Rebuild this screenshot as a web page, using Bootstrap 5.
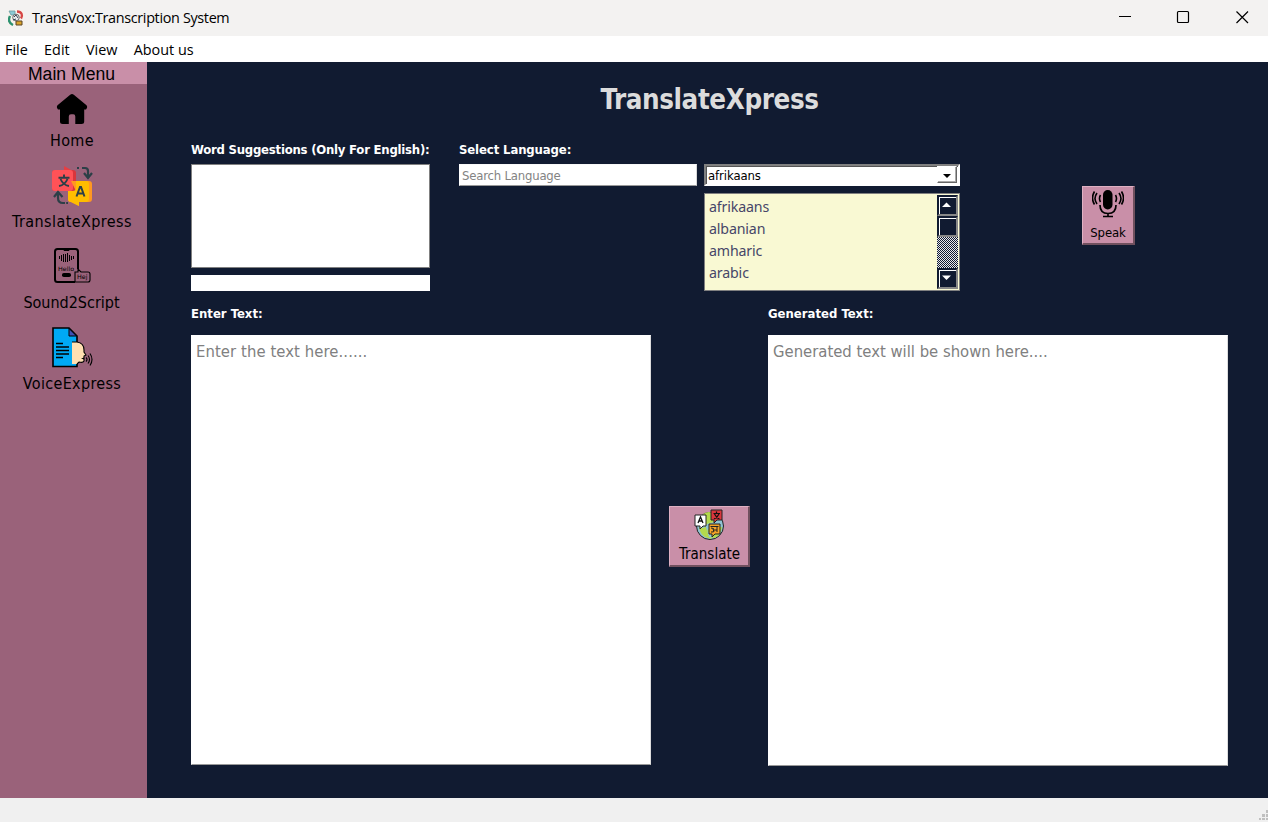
<!DOCTYPE html>
<html lang="en">
<head>
<meta charset="utf-8">
<title>TransVox:Transcription System</title>
<link href="https://cdn.jsdelivr.net/npm/bootstrap@5.3.0/dist/css/bootstrap.min.css" rel="stylesheet">
<style>
  :root { --navy:#111b31; --plum:#9a627a; --pink:#c98fa8; }
  body { width:1268px; height:822px; font-family:"DejaVu Sans Condensed","DejaVu Sans",sans-serif; font-stretch:condensed; color:#000; overflow:hidden; background:#f0f0f0; }
  .titlebar { height:36px; background:#f3f2f1; font:14.4px/34px "Open Sans","Noto Sans",sans-serif; }
  .app-icon { margin-left:8px; }
  .titlebar .caption { margin-left:8px; letter-spacing:-.34px; }
  .winctl { width:59px; }
  .winctl-last { margin-right:-4px; }
  .menubar { height:26px; background:#fff; font:14.4px/27px "Open Sans","Noto Sans",sans-serif; padding-left:5px; gap:16.3px; }
  .side { width:147px; background:var(--plum); }
  .side-head { height:22px; background:var(--pink); font:17.6px/24px "Liberation Sans",sans-serif; padding-right:4px; }
  .side-item { height:81px; padding-top:4px; padding-right:4px; font-size:16px; line-height:20px; color:#000; }
  .side-item svg { display:block; margin-bottom:1px; }
  .side-tall { padding-top:0; }
  .side-tall svg { margin-bottom:5px; }
  .wide-1 { letter-spacing:.42px; padding-left:1px; }
  .wide-2 { letter-spacing:.33px; padding-left:1px; }
  .work { background:var(--navy); padding:0 40px 0 44px; }
  .work h1 { font-size:27.5px; line-height:34px; font-weight:700; color:#dcdcdc; letter-spacing:-.4px; margin:20px 0 0; height:59px; }
  .lbl { font-size:13px; font-weight:700; line-height:18px; height:17px; color:#fff; white-space:nowrap; }
  .lbl-tight { letter-spacing:-.23px; }
  .lbl-snug { letter-spacing:-.12px; }
  .top-grid { height:150px; }
  .lower { margin-top:14px; }
  .col-words { width:239px; margin-right:29px; }
  .suggest { height:104px; border:1px solid #808080; background:#fff; margin-top:6px; }
  .word-entry { height:16px; background:#fff; margin-top:7px; }
  .pickers { margin-top:6px; }
  .search { width:238px; height:22px; border:1px solid; border-color:#f8f8f8 #d8d8d8 #999 #fff; background:#fff; color:#838383; font-size:13px; letter-spacing:-.2px; line-height:21px; padding-left:2px; margin-right:7px; }
  .combo { width:256px; height:22px; background:#fff; border:2px solid; border-color:#808080 #fff #fff #808080; box-shadow:inset 1px 1px #555; font-size:13px; letter-spacing:-.1px; line-height:19px; padding-left:2px; }
  .combo-btn { width:20px; height:17px; border:1px solid; border-color:#fff #666 #666 #fff; box-shadow:inset -1px -1px #aaa; margin-right:1px; }
  .langs { width:256px; height:98px; margin-top:7px; background:#f9f9d3; border:1px solid #808080; font-family:"Noto Sans",sans-serif; font-size:14.2px; letter-spacing:-.15px; line-height:22px; color:#464668; padding:1px 1px 1px 4px; }
  .lang-rows { padding-top:1px; }
  .sbar { width:21px; height:94px; background:repeating-conic-gradient(#e9e9ec 0 25%, var(--navy) 0 50%) 0 0/2px 2px; }
  .sbtn { height:21px; background:var(--navy); border:2px solid; border-color:var(--navy) #888 #888 var(--navy); box-shadow:inset 1px 1px #fff; }
  .tkbtn { background:var(--pink); border:solid; border-width:1px 2px 2px 1px; border-color:#dfb1c3 #70505e #70505e #dfb1c3; }
  .speak { width:53px; height:59px; margin:45px 0 0 122px; font-size:13px; letter-spacing:-.1px; line-height:16px; padding:2px 0 2px 0; }
  .edit { width:460px; height:430px; background:#fff; border:1px solid; border-color:#fff #ddd #999 #fff; font-size:16.5px; line-height:24px; color:#808080; padding:4px 0 0 4px; margin-top:13px; }
  .edit-in { letter-spacing:.08px; }
  .edit-out { height:431px; }
  .go { width:81px; height:61px; margin:201px 18px 0; font-size:15px; line-height:19px; padding:2px 0 1px 1px; }
  .status { height:24px; background:#f0f0f0; }
</style>
</head>
<body class="d-flex flex-column">
<header class="titlebar d-flex align-items-center">
  <svg class="app-icon" width="16" height="16" viewBox="0 0 16 16"><rect width="16" height="16" rx="2" fill="#f7f2ec"/><path d="M1 1h6v4H3z" fill="#8ccbd5" stroke="#6a9aa2" stroke-width=".8"/><path d="M2 6c-2 4-1 7 3 9" fill="none" stroke="#2c9270" stroke-width="2.4"/><path d="M9 1.500c5 0 6 4 4 7" fill="none" stroke="#d64746" stroke-width="2.4"/><path d="M8 11h6v4H8z" fill="#d9a329" stroke="#594527"/><circle cx="8" cy="7.500" r="3.300" fill="#eee" stroke="#666"/><path d="M6 7l2-2 2 3M5 10l3-1" stroke="#345" fill="none"/></svg>
  <span class="caption me-auto">TransVox:Transcription System</span>
  <svg class="winctl" height="36" viewBox="0 0 59 36"><path d="M24 16.500h12" stroke="#000"/></svg>
  <svg class="winctl" height="36" viewBox="0 0 59 36"><rect x="23.500" y="11.500" width="11" height="11" rx="1" fill="none" stroke="#000" stroke-width="1.200"/></svg>
  <svg class="winctl winctl-last" height="36" viewBox="0 0 59 36"><path d="M23.500 11.500l11.500 11.500M35 11.500L23.500 23" stroke="#000" stroke-width="1.200"/></svg>
</header>
<nav class="menubar d-flex"><span>File</span><span>Edit</span><span>View</span><span>About us</span></nav>
<div class="d-flex flex-grow-1">
  <aside class="side d-flex flex-column text-center">
    <div class="side-head">Main Menu</div>
    <div class="side-item d-flex flex-column align-items-center">
      <svg width="42" height="42" viewBox="0 0 42 42"><path d="M19.200 6.700Q21 5.200 22.800 6.700L35.500 17.300Q37 19 35 21.500L33.200 21.500V33.500Q33.200 36 30.500 36H24.300V28.500Q24.300 26.300 22.300 26.300H20Q17.800 26.300 17.800 28.500V36H11.700Q9 36 9 33.500V21.500H7Q5 19 6.500 17.300Z" fill="#000"/></svg>
      <span class="wide-1">Home</span>
    </div>
    <div class="side-item side-tall d-flex flex-column align-items-center">
      <svg width="42" height="42" viewBox="0 0 42 42"><path d="M13 6V1l9 5" fill="#e63f43"/><rect x="1" y="5" width="24" height="21" rx="3" fill="#d9363c"/><rect x="1" y="5" width="21" height="21" rx="3" fill="#ff5257"/><path d="M20 16h18q3 0 3 3v15q0 3-3 3H28v4l-8-4q-3 0-3-3v-8h8z" fill="#ff9822"/><path d="M25 16h10q3 0 3 3v15q0 3-3 3h-7v4l-8-4q-3 0-3-3v-8h5q3 0 3-3z" fill="#ffbd00"/><path d="M13 9.500v3M7.500 12.800h11M9.500 14q2.500 6 8.500 7M16.500 14q-2.500 6-8.500 7" stroke="#2c3f47" stroke-width="1.900" fill="none"/><path d="M25.500 31.500l3.500-9.500h1l3.500 9.500M27 28.500h5" stroke="#2c3f47" stroke-width="2" fill="none"/><path d="M31 3h3q3 0 3 3v6M33 8l4 5 4-5M14 38h-2q-5 0-5-5v-4M3 32l4-5 4.500 5M26 3h2M17 38h-1.800" stroke="#2c3f47" stroke-width="2.200" fill="none"/></svg>
      <span class="wide-1">TranslateXpress</span>
    </div>
    <div class="side-item side-tall d-flex flex-column align-items-center">
      <svg width="42" height="42" viewBox="0 0 42 42"><path d="M27 23V5.500Q27 3 24.500 3H6.500Q4 3 4 5.500v28Q4 36 6.500 36H24" fill="none" stroke="#000" stroke-width="2"/><path d="M12 3l1 2h5l1-2z"/><path d="M8.500 10v3M10.500 9v6M12.500 8v8M14.500 8v8M16.500 7v9M18.500 9v6M20.500 10v4M22.500 10v3" stroke="#000" stroke-width="1"/><text x="7" y="24.500" font-family="DejaVu Sans" font-size="6" textLength="16" lengthAdjust="spacingAndGlyphs">Hello</text><rect x="11" y="27" width="9" height="4" rx="1.800"/><path d="M24 26h3v-3l3 3h7q2 0 2 2v6q0 2-2 2H24z" fill="#9a627a" stroke="#000" stroke-width="1.100"/><text x="26" y="33.200" font-family="DejaVu Sans" font-size="6.200" textLength="10.500" lengthAdjust="spacingAndGlyphs">Hej</text></svg>
      <span>Sound2Script</span>
    </div>
    <div class="side-item side-tall d-flex flex-column align-items-center">
      <svg width="42" height="42" viewBox="0 0 42 42"><path d="M2 1h16l8 8V39.500H2Z" fill="#00a9f4" stroke="#000" stroke-width="1.600"/><path d="M18 1.500v7.500h7.500z" fill="#4050b5" stroke="#000"/><path d="M5 16.500h7M5 20h13M5 23.500h13M5 27h13M5 30.500h7" stroke="#000" stroke-width="1.300"/><path d="M21 15h5q7 1 7 8v2l2 3-2 1v5q-1 2-5 1l-2 2h-5z" fill="#ffe0b2"/><path d="M21 15h5q7 1 7 8v2l2 3-2 1v5q-1 2-5 1l-2 2" fill="none" stroke="#000" stroke-width="1.100"/><path d="M33 30.500l-3 1 3 1" fill="#000"/><path d="M35 30.500q2 2 0 4M37 28.500q3 4 0 8M39 26.500q4 6 0 12" fill="none" stroke="#000" stroke-width="1.100"/></svg>
      <span class="wide-2">VoiceExpress</span>
    </div>
  </aside>
  <main class="work flex-grow-1">
    <h1 class="text-center">TranslateXpress</h1>
    <section class="top-grid d-flex">
      <div class="col-words"><div class="lbl lbl-tight">Word Suggestions (Only For English):</div><div class="suggest"></div><div class="word-entry"></div></div>
      <div>
        <div class="lbl lbl-snug">Select Language:</div>
        <div class="pickers d-flex">
          <div class="search">Search Language</div>
          <div>
            <div class="combo d-flex justify-content-between"><span>afrikaans</span><div class="combo-btn"><svg class="d-block" width="18" height="15"><path d="M5 7h8L9 11z"/></svg></div></div>
            <div class="langs d-flex justify-content-between">
              <div class="lang-rows"><div>afrikaans</div><div>albanian</div><div>amharic</div><div>arabic</div></div>
              <div class="sbar d-flex flex-column">
                <div class="sbtn"><svg class="d-block" width="17" height="17"><path d="M3 10h9L7.500 5.500z" fill="#fff"/></svg></div>
                <div class="sbtn"></div>
                <div class="sbtn mt-auto"><svg class="d-block" width="17" height="17"><path d="M3 5.500h9L7.500 10z" fill="#fff"/></svg></div>
              </div>
            </div>
          </div>
        </div>
      </div>
      <div class="tkbtn speak d-flex flex-column align-items-center">
        <svg width="32" height="32" viewBox="0 0 32 32"><rect x="11" y="1" width="9.500" height="19.500" rx="4.700"/><path d="M8 16q0 8.500 8 8.500T24 16M16 24v4M11 27.500h10" fill="none" stroke="#000" stroke-width="1.700"/><path d="M8.500 6q-2 3.500 0 7M5 4q-4 5.500 0 11M2.500 2.500q-4 6.500 0 13M23.500 6q2 3.500 0 7M27 4q4 5.500 0 11M29.500 2.500q4 6.500 0 13" fill="none" stroke="#000" stroke-width="1.600"/></svg>
        <span class="mt-auto">Speak</span>
      </div>
    </section>
    <section class="lower d-flex">
      <div><div class="lbl">Enter Text:</div><div class="edit edit-in">Enter the text here......</div></div>
      <div class="tkbtn go d-flex flex-column align-items-center">
        <svg width="32" height="32" viewBox="0 0 32 32"><circle cx="16" cy="17" r="13.500" fill="#8fc3d3" stroke="#222"/><path d="M8 6q6-5 10-2l2 9-7 2-3 4-5-1q1 7 6 10l6 2 2-3-6-5 4-5 11 1q-1 8-7 11l-6-1" fill="#b4d94c"/><path d="M17 1h11v10h-5l-3 3v-3h-3z" fill="#d9363c" stroke="#222"/><path d="M22.500 2.500v2M19.500 4.500h6.500M20.500 5q2 4 5 5M25 5q-2 4-5 5" fill="none" stroke="#111" stroke-width="1.200"/><path d="M1 6h11v11H9l-3 3v-3H1z" fill="#fff" stroke="#222"/><path d="M4 14l2.500-6L9 14M5 12h3" fill="none" stroke="#111" stroke-width="1.300"/><path d="M15 15h11v10h-5l-3 3v-3h-3z" fill="#f5a329" stroke="#222"/><path d="M16.500 17.500h8M23 17.500v5.500M17 19q4 0 2 2q3 2-2 2M19 21h4" fill="none" stroke="#222"/></svg>
        <span class="mt-auto">Translate</span>
      </div>
      <div><div class="lbl">Generated Text:</div><div class="edit edit-out">Generated text will be shown here....</div></div>
    </section>
  </main>
</div>
<footer class="status d-flex justify-content-end align-items-end"><svg width="9" height="12" viewBox="0 0 9 12"><path d="M7 0h2v3H7zM3 4h3v3H3zM7 4h2v3H7zM0 8h2v2H0zM3 8h3v2H3zM7 8h2v2H7z" fill="#bfbfbf"/></svg></footer>
<script src="https://cdn.jsdelivr.net/npm/bootstrap@5.3.0/dist/js/bootstrap.bundle.min.js"></script>
</body>
</html>
